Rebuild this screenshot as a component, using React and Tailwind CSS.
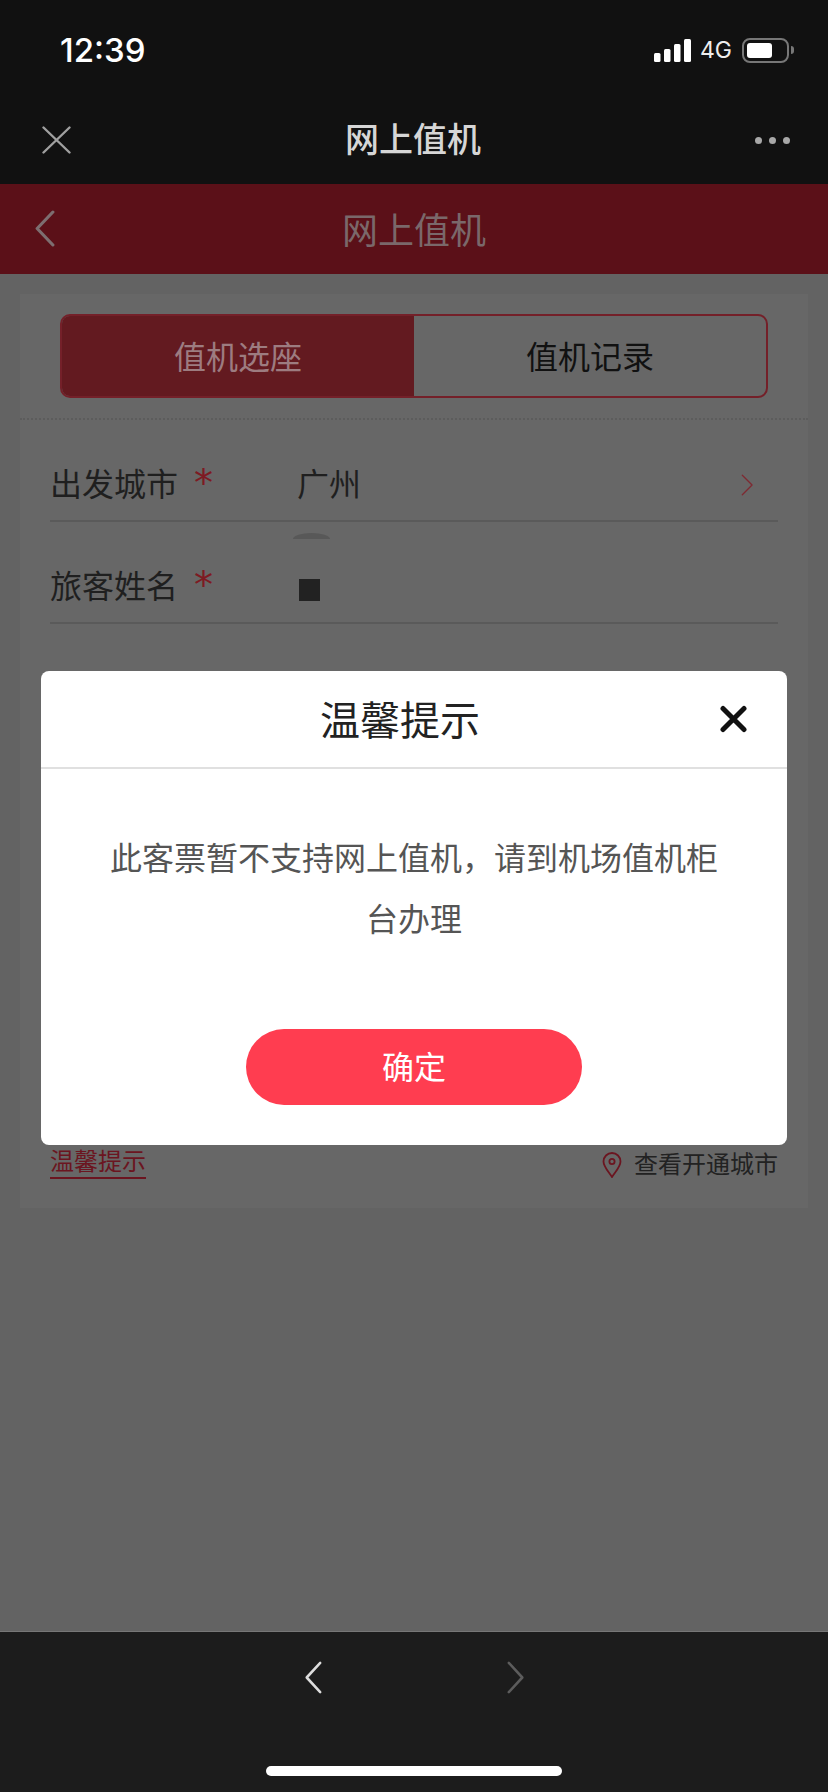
const CJK = { fontFamily: '"Noto Sans CJK SC", "Noto Sans", sans-serif' };

function Chevron({ dir = 'left', className, strokeWidth = 3 }) {
  const d = dir === 'left' ? 'M18 2 L3 18 L18 34' : 'M2 2 L17 18 L2 34';
  return (
    <svg viewBox="0 0 20 36" fill="none" preserveAspectRatio="none" className={className} stroke="currentColor" strokeWidth={strokeWidth} strokeLinecap="round" strokeLinejoin="round">
      <path d={d} />
    </svg>
  );
}

function StatusBar() {
  return (
    <div className="flex h-[96px] items-center justify-between pl-[60px] pr-[34px] pt-[4px]">
      <span className="text-[33px] font-medium leading-none text-white" style={{ fontFamily: 'Inter, sans-serif' }}>12:39</span>
      <div className="flex items-center">
        <svg width="37" height="23" viewBox="0 0 37 23" fill="#fff">
          <rect x="0" y="14" width="6.5" height="9" rx="1.5" />
          <rect x="10" y="10" width="6.5" height="13" rx="1.5" />
          <rect x="20" y="5" width="6.5" height="18" rx="1.5" />
          <rect x="30" y="0" width="7" height="23" rx="1.5" />
        </svg>
        <span className="ml-[9px] text-[23px] leading-none text-[#eeeeee]" style={{ fontFamily: 'Inter, sans-serif' }}>4G</span>
        <div className="ml-[10px] flex h-[25px] w-[47px] items-center rounded-[8px] border-2 border-[#777777] pl-[3px]">
          <div className="h-[15px] w-[25px] rounded-[3px] bg-white" />
        </div>
        <div className="ml-[2px] h-[8px] w-[3px] rounded-r-full bg-[#777777]" />
      </div>
    </div>
  );
}

function NavBar() {
  return (
    <div className="relative flex h-[88px] items-center justify-between pl-[42px] pr-[38px]">
      <svg width="29" height="28" viewBox="0 0 29 28" stroke="#a0a0a0" strokeWidth="2.4" strokeLinecap="round">
        <path d="M1.5 1.5 L27.5 26.5 M27.5 1.5 L1.5 26.5" />
      </svg>
      <span className="mb-[4px] text-[34px] font-medium leading-none text-[#d6d6d6]">网上值机</span>
      <div className="flex gap-[7px]">
        <div className="size-[7px] rounded-full bg-[#a8a8a8]" />
        <div className="size-[7px] rounded-full bg-[#a8a8a8]" />
        <div className="size-[7px] rounded-full bg-[#a8a8a8]" />
      </div>
    </div>
  );
}

function FormRow({ label, children }) {
  return (
    <div className="flex h-[102px] items-center border-b-2 border-[#5a5a5a] pt-[24px] text-[32px] leading-none text-[#1f1f1f]">
      <span className="w-[128px]">{label}</span>
      <span className="ml-[16px] mt-[2px] w-[103px] text-[38px] leading-none text-[#7e1a22]" style={{ fontFamily: '"DejaVu Sans", sans-serif' }}>*</span>
      {children}
    </div>
  );
}

function Modal() {
  return (
    <div className="absolute left-[41px] top-[671px] w-[746px] rounded-[8px] bg-white">
      <div className="relative flex h-[98px] items-center justify-center border-b-2 border-[#e0e0e0] pb-[2px] pr-[28px]">
        <span className="text-[40px] leading-none text-[#222222]">温馨提示</span>
        <svg className="absolute right-[39px] top-[34px]" width="29" height="28" viewBox="0 0 29 28" stroke="#111111" strokeWidth="5" strokeLinecap="round">
          <path d="M4 3.5 L25 24.5 M25 3.5 L4 24.5" />
        </svg>
      </div>
      <p className="px-[60px] pt-[57px] text-center text-[32px] leading-[61px] text-[#555555]">
        此客票暂不支持网上值机，请到机场值机柜台办理
      </p>
      <div className="flex justify-center pb-[40px] pt-[81px]">
        <div className="flex h-[76px] w-[336px] items-center justify-center rounded-full bg-[#ff3d50] pb-[4px] text-[32px] leading-none text-white">确定</div>
      </div>
    </div>
  );
}

export default function App() {
  return (
    <div className="relative flex h-[1792px] w-[828px] flex-col overflow-hidden bg-[#111111]" style={CJK}>
      <StatusBar />
      <NavBar />

      {/* red title bar */}
      <div className="relative flex h-[90px] items-center justify-center bg-[#5b1018]">
        <Chevron className="absolute left-[34px] top-[26px] h-[37px] w-[21px] text-[#7d6e70]" />
        <span className="pb-[2px] text-[36px] leading-none text-[#7a686a]">网上值机</span>
      </div>

      <main className="flex-1 bg-[#636363] px-5 pt-5">
        <div className="flex h-[914px] flex-col bg-[#676767]">
          <div className="px-10 pt-5">
            <div className="flex h-[84px] overflow-hidden rounded-[10px] border-2 border-[#742029] text-[32px] leading-none">
              <div className="flex w-[352px] items-center justify-center bg-[#631a20] pb-[2px] text-[#9d7c80]">值机选座</div>
              <div className="flex flex-1 items-center justify-center pb-[2px] text-[#111111]">值机记录</div>
            </div>
          </div>
          <div className="mt-[20px] border-t-2 border-dotted border-[#5c5c5c]" />

          <div className="px-[30px]">
            <FormRow label="出发城市">
              <span className="flex-1">广州</span>
              <Chevron dir="right" strokeWidth={2} className="mr-[24px] mt-[6px] h-[22px] w-[13px] text-[#7e2a32]" />
            </FormRow>
            <div className="relative">
              <div className="absolute left-[243px] top-[11px] h-[6px] w-[37px] rounded-t-[50%_100%] bg-[#585858]" />
              <FormRow label="旅客姓名">
                <div className="ml-[2px] mt-[12px] h-[22px] w-[21px] bg-[#222222]" />
              </FormRow>
            </div>
          </div>

          <div className="mt-auto flex items-start justify-between px-[30px] pb-[29px] text-[24px] leading-none">
            <span className="border-b-2 border-[#6b1520] pb-[5px] text-[#6b1520]">温馨提示</span>
            <div className="flex items-center text-[#222222]">
              <svg className="mr-[12px] mt-[4px]" width="20" height="26" viewBox="0 0 20 26" fill="none" stroke="#6b1520" strokeWidth="1.8">
                <path d="M10 25 C6 19 1.5 14.5 1.5 9.5 A8.5 8.5 0 0 1 18.5 9.5 C18.5 14.5 14 19 10 25 Z" />
                <circle cx="10" cy="9.5" r="2.6" />
              </svg>
              查看开通城市
            </div>
          </div>
        </div>
      </main>

      {/* browser bottom bar */}
      <div className="flex h-[161px] flex-col items-center border-t border-[#777777] bg-[#1c1c1c] pt-[29px]">
        <div className="flex gap-[185px]">
          <Chevron className="h-[33px] w-[18px] text-[#dddddd]" strokeWidth={2.8} />
          <Chevron dir="right" className="h-[33px] w-[18px] text-[#5c5c5c]" strokeWidth={2.8} />
        </div>
        <div className="mt-[72px] h-[10px] w-[296px] rounded-full bg-white" />
      </div>

      <Modal />
    </div>
  );
}
